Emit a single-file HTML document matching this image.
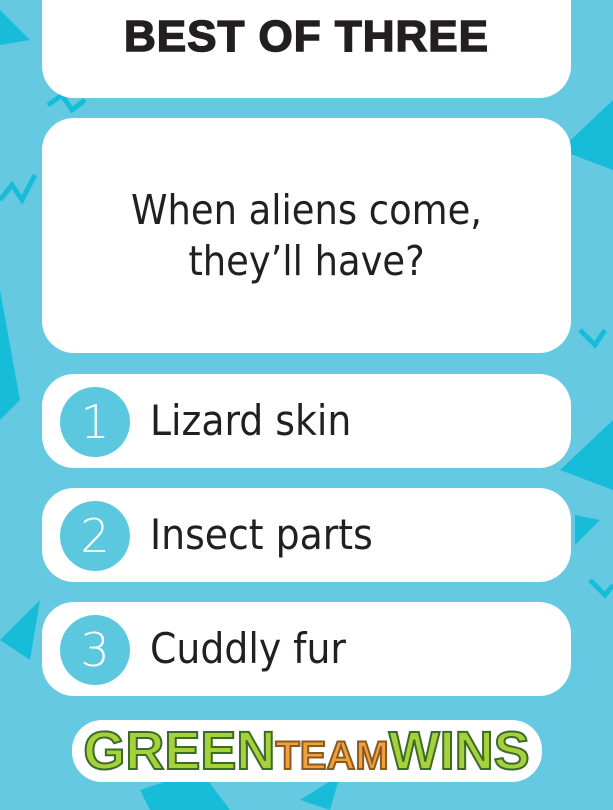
<!DOCTYPE html>
<html><head><meta charset="utf-8"><style>
html,body{margin:0;padding:0}
body{width:613px;height:810px;background:#66c9e2;position:relative;overflow:hidden;font-family:"Liberation Sans",sans-serif}
.card{position:absolute;left:42px;width:529px;background:#fff;border-radius:32px}
.title{top:-40px;height:138px}
.title div{position:absolute;top:52px;width:100%;text-align:center;font-weight:900;font-size:44px;color:#231f20;letter-spacing:1px;-webkit-text-stroke:1.5px #231f20}
.q{top:118px;height:235px;display:flex;align-items:center;justify-content:center;text-align:center;font-size:41px;line-height:51px;color:#231f20;font-family:"DejaVu Sans Condensed","Liberation Sans Narrow",sans-serif;font-weight:300}
.a{height:94px}
.a .c{position:absolute;left:18px;top:13px;width:70px;height:70px;border-radius:50%;background:#5cc8e0;color:#fff;font-size:46px;line-height:70px;text-align:center;font-family:"DejaVu Sans",sans-serif;font-weight:200}
.a .t{position:absolute;left:108px;top:22px;font-size:42px;color:#231f20;font-family:"DejaVu Sans Condensed","Liberation Sans Narrow",sans-serif}
.lbg{position:absolute;left:72px;top:720px;width:470px;height:62px;background:#fff;border-radius:30px}
.logo{position:absolute;top:718px;left:0;width:613px;text-align:center;font-weight:900;font-size:54px;line-height:66px;letter-spacing:0px;white-space:nowrap}
.logo span{-webkit-text-stroke:2px #3a6b2a}
</style></head><body>
<svg width="613" height="810" style="position:absolute;left:0;top:0">
<g fill="#17bdd8">
<polygon points="0,10 30,40 0,45"/>
<polygon points="560,150 613,100 613,170"/>
<polygon points="0,290 20,400 0,420"/>
<polygon points="560,470 613,420 613,490"/>
<polygon points="575,515 600,520 575,545"/>
<polygon points="140,790 200,770 230,810 150,810"/>
<polygon points="0,640 40,600 30,660"/>
<polygon points="300,800 340,775 330,810"/>
</g>
<g stroke="#17bdd8" stroke-width="5" fill="none">
<polyline points="48,105 62,95 72,110 85,100"/>
<polyline points="0,200 12,185 22,200 35,175"/>
<polyline points="580,330 595,345 605,330"/>
<polyline points="590,580 605,595 613,585"/>
</g>
</svg>
<div class="card title"><div>BEST OF THREE</div></div>
<div class="card q">When aliens come,<br>they’ll have?</div>
<div class="card a" style="top:374px"><div class="c">1</div><div class="t">Lizard skin</div></div>
<div class="card a" style="top:488px"><div class="c">2</div><div class="t">Insect parts</div></div>
<div class="card a" style="top:602px"><div class="c">3</div><div class="t">Cuddly fur</div></div>
<div class="lbg"></div>
<div class="logo"><span style="color:#a6d13a">GREEN</span><span style="color:#f0a040;font-size:40px;-webkit-text-stroke:2px #8a5a20">TEAM</span><span style="color:#a6d13a">WINS</span></div>
</body></html>
